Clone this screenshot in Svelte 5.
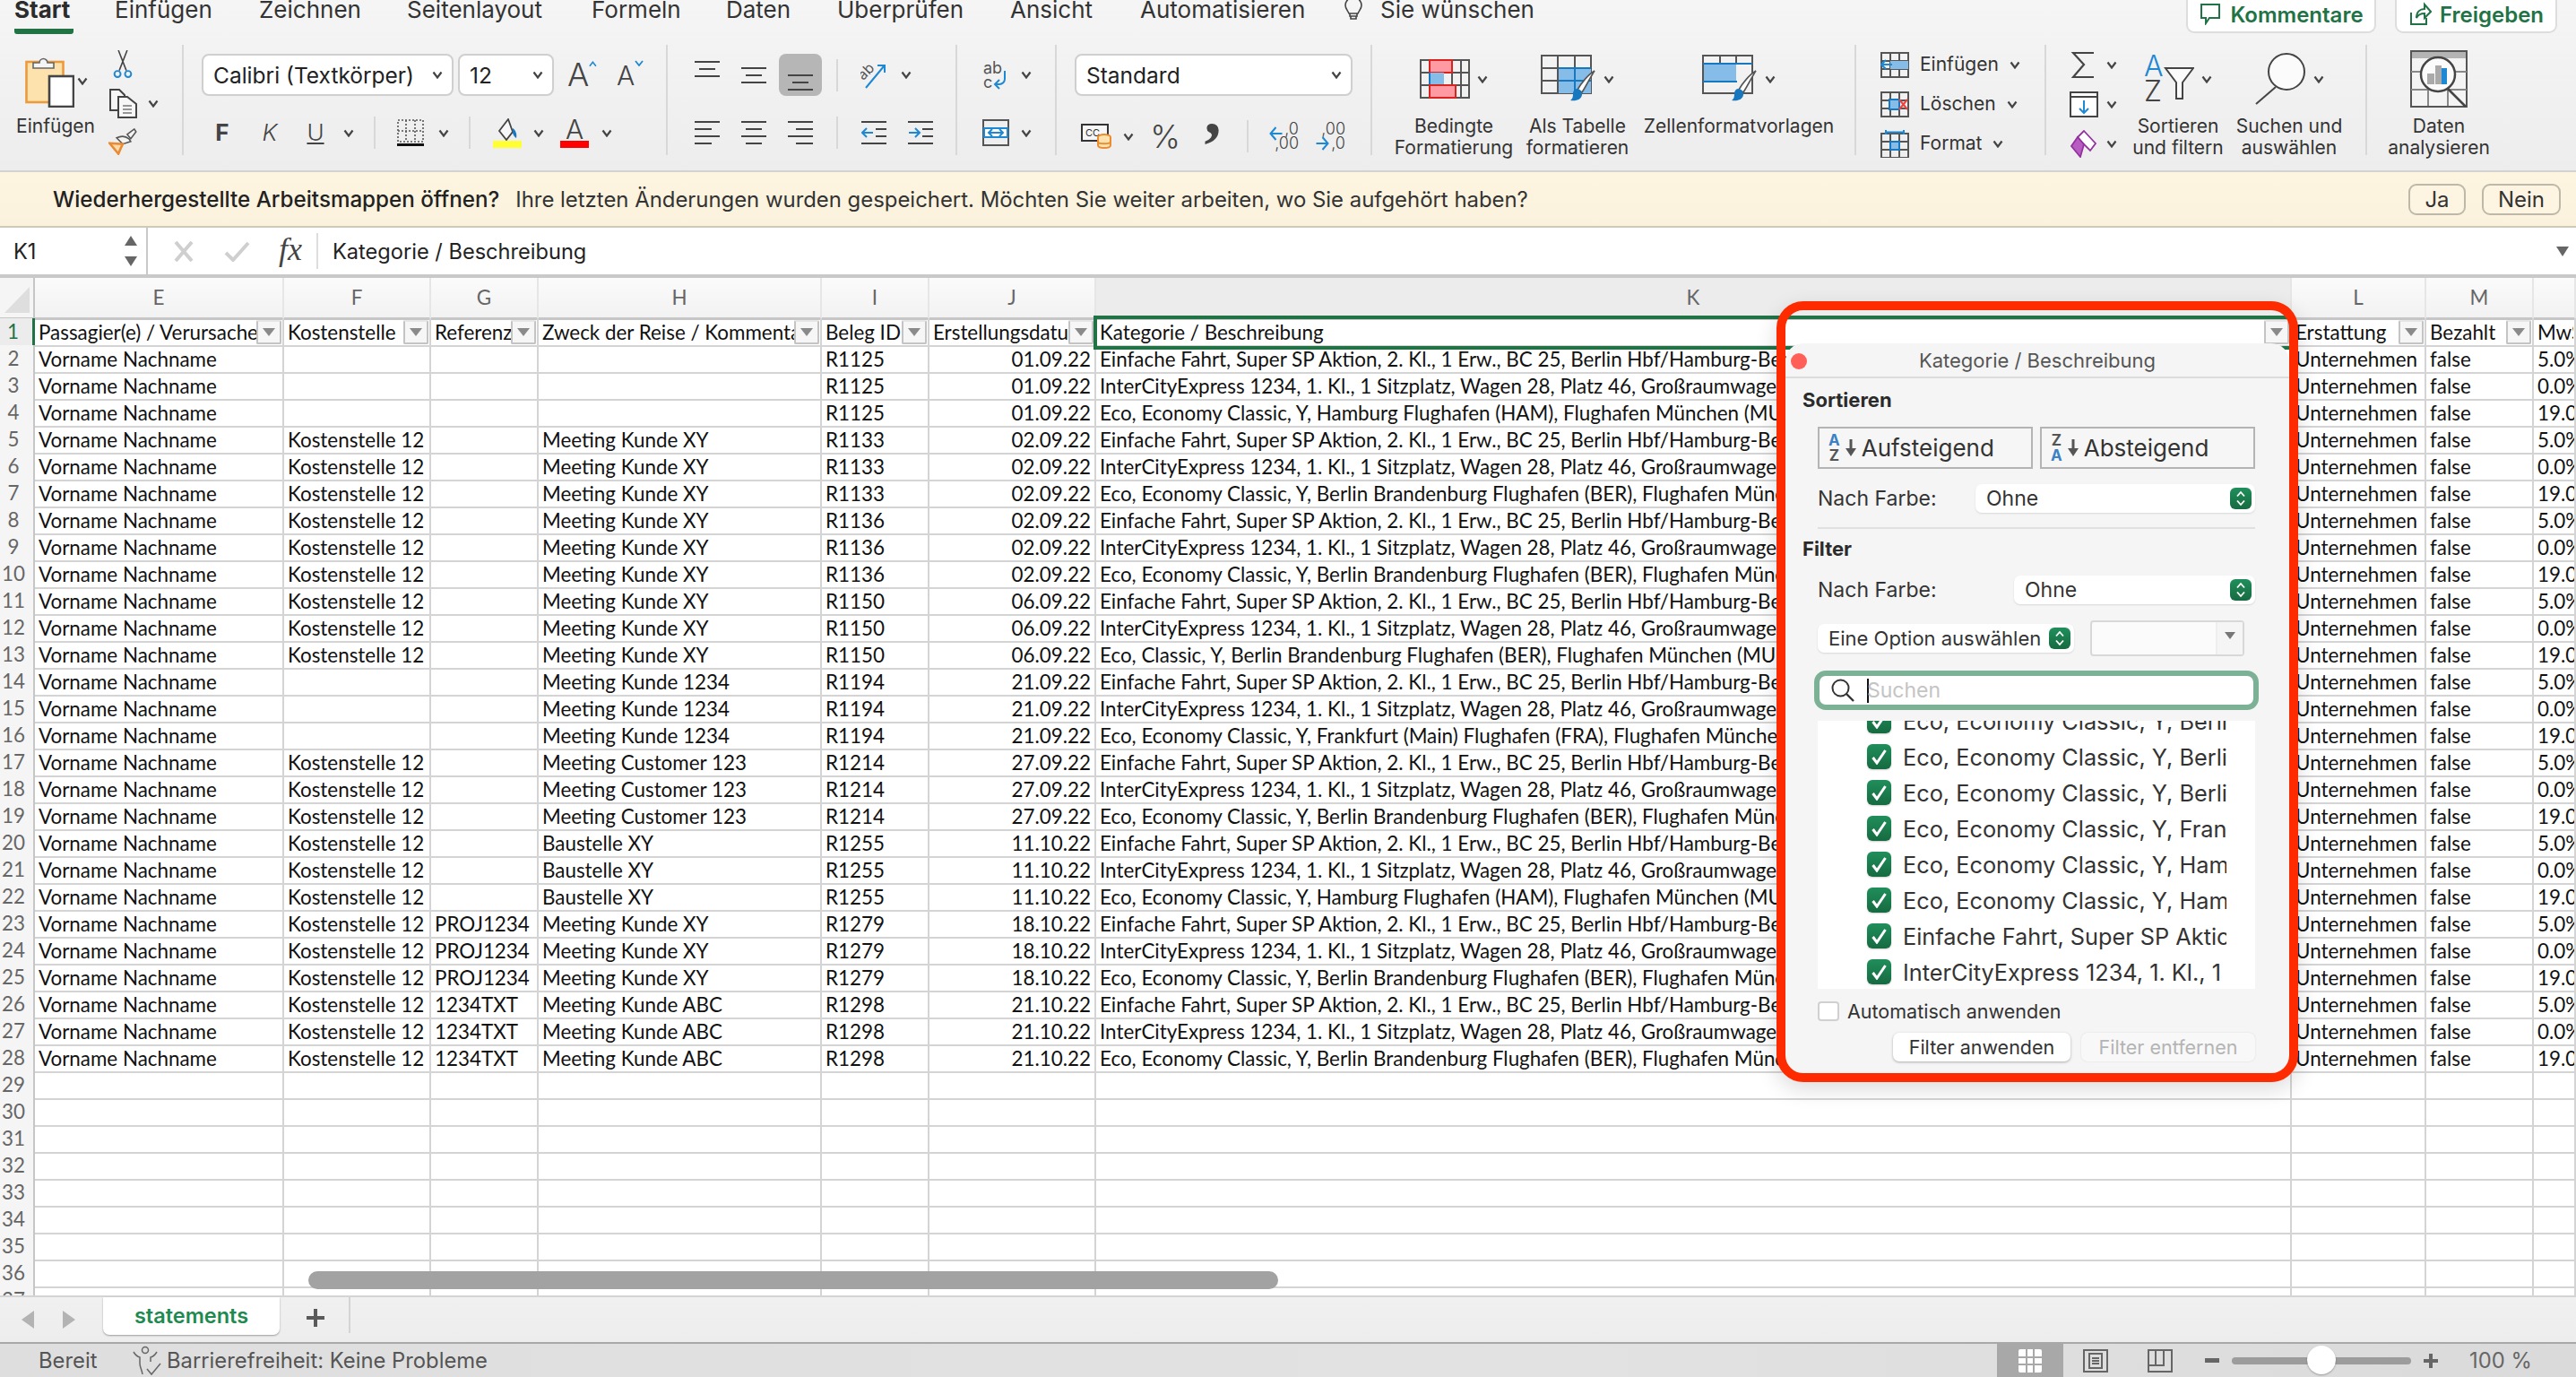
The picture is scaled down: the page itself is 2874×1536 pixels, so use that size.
<script lang="ts">
  const tabs = ['Start', 'Einfügen', 'Zeichnen', 'Seitenlayout', 'Formeln', 'Daten', 'Überprüfen', 'Ansicht', 'Automatisieren'];

  const oneWay = 'Einfache Fahrt, Super SP Aktion, 2. Kl., 1 Erw., BC 25, Berlin Hbf/Hamburg-Bergedorf';
  const ice = 'InterCityExpress 1234, 1. Kl., 1 Sitzplatz, Wagen 28, Platz 46, Großraumwagen, Fenster';
  const ecoBer = 'Eco, Economy Classic, Y, Berlin Brandenburg Flughafen (BER), Flughafen München (MUC)';
  const ecoHam = 'Eco, Economy Classic, Y, Hamburg Flughafen (HAM), Flughafen München (MUC)';
  const ecoFra = 'Eco, Economy Classic, Y, Frankfurt (Main) Flughafen (FRA), Flughafen München (MUC)';
  const ecoOld = 'Eco, Classic, Y, Berlin Brandenburg Flughafen (BER), Flughafen München (MUC)';
  const ks = 'Kostenstelle 12';

  const receipts = [
    { id: 'R1125', date: '01.09.22', f: '', g: '', h: '', flight: ecoHam },
    { id: 'R1133', date: '02.09.22', f: ks, g: '', h: 'Meeting Kunde XY', flight: ecoBer },
    { id: 'R1136', date: '02.09.22', f: ks, g: '', h: 'Meeting Kunde XY', flight: ecoBer },
    { id: 'R1150', date: '06.09.22', f: ks, g: '', h: 'Meeting Kunde XY', flight: ecoOld },
    { id: 'R1194', date: '21.09.22', f: '', g: '', h: 'Meeting Kunde 1234', flight: ecoFra },
    { id: 'R1214', date: '27.09.22', f: ks, g: '', h: 'Meeting Customer 123', flight: ecoBer },
    { id: 'R1255', date: '11.10.22', f: ks, g: '', h: 'Baustelle XY', flight: ecoHam },
    { id: 'R1279', date: '18.10.22', f: ks, g: 'PROJ1234', h: 'Meeting Kunde XY', flight: ecoBer },
    { id: 'R1298', date: '21.10.22', f: ks, g: '1234TXT', h: 'Meeting Kunde ABC', flight: ecoBer }
  ];

  const rows = receipts.flatMap((r) => [
    { ...r, k: oneWay, n: '5.0%' },
    { ...r, k: ice, n: '0.0%' },
    { ...r, k: r.flight, n: '19.0%' }
  ]);
  const emptyRows = Array.from({ length: 9 }, (_, i) => i + 29);

  const filterValues = [
    'Eco, Economy Classic, Y, Berlin Brandenburg',
    'Eco, Economy Classic, Y, Berlin Brandenburg',
    'Eco, Economy Classic, Y, Berlin Brandenburg',
    'Eco, Economy Classic, Y, Frankfurt (Main)',
    'Eco, Economy Classic, Y, Hamburg Flughafen',
    'Eco, Economy Classic, Y, Hamburg Flughafen',
    'Einfache Fahrt, Super SP Aktion, 2. Kl.',
    'InterCityExpress 1234, 1. Kl., 1 Sitzplatz'
  ];
</script>

{#snippet chev()}
  <svg class="chev" width="12" height="9" viewBox="0 0 12 9"><path d="M1.5 1.5 6 7.5l4.5-6" fill="none" stroke="#444" stroke-width="2.2" /></svg>
{/snippet}

{#snippet sep()}
  <span class="vsep"></span>
{/snippet}

{#snippet tri()}
  <svg width="16" height="11" viewBox="0 0 16 11"><path d="M1 1h14L8 10z" fill="#8a8a8a" /></svg>
{/snippet}

{#snippet stepper()}
  <span class="stepper">
    <svg width="12" height="18" viewBox="0 0 12 18"><path d="M2 6.5 6 2l4 4.5M2 11.5 6 16l4-4.5" fill="none" stroke="#fff" stroke-width="1.8" /></svg>
  </span>
{/snippet}

{#snippet hAlign(d)}
  <svg width="28" height="27" viewBox="0 0 28 27"><path {d} stroke="#444" stroke-width="2" fill="none" /></svg>
{/snippet}

{#snippet brush()}
  <path d="M60 18C56 24 50 36 46 42l-5-3C45 32 53 22 60 18z" fill="#fff" stroke="#555" stroke-width="1.6" />
  <path d="M40 38c3 0 7 3 6 7-1 5-6 7-13 6 3-2 3-5 3-8 0-2 2-5 4-5z" fill="#1777bf" />
{/snippet}

{#snippet grid32()}
  <path d="M1 1h30v27H1zM11 1v27M21 1v27M1 10h30M1 19h30" fill="none" stroke="#555" stroke-width="2" />
{/snippet}

<div class="window">
  <div class="top">
    <header class="tabbar">
      <nav class="tabs">
        {#each tabs as tab, i}
          <span class="tab" class:active={i === 0}>{tab}</span>
        {/each}
        <svg class="bulb" width="22" height="28" viewBox="0 0 22 28"><path d="M11 1a9 9 0 0 0-9 9c0 4 3 6 4 9h10c1-3 4-5 4-9a9 9 0 0 0-9-9zM7 19h8v3H7zM8 22h6v3H8z" fill="none" stroke="#444" stroke-width="1.6" /></svg>
        <span class="tab">Sie wünschen</span>
      </nav>
      <div class="share">
        <button class="pill comments">
          <svg width="26" height="24" viewBox="0 0 26 24"><path d="M3 1h20v15H12l-4 6v-6H3z" fill="none" stroke="#217346" stroke-width="2" /></svg>
          Kommentare
        </button>
        <button class="pill release">
          <svg width="26" height="28" viewBox="0 0 26 28"><path d="M3 12v13h17v-7M9 18c0-7 4-10 9-10V3l7 8-7 7v-5c-4 0-7 1-9 5z" fill="none" stroke="#217346" stroke-width="2" /></svg>
          Freigeben
        </button>
      </div>
    </header>

    <div class="ribbon">
      <section class="group g-clip">
        <div class="paste">
          <div class="paste-icon">
            <svg width="55" height="60" viewBox="0 0 55 60">
              <rect x="1.5" y="9" width="41" height="45" fill="#fde2ae" stroke="#ec9a3c" stroke-width="2.6" />
              <path d="M9 16v-6h7a4.500 4.500 0 0 1 9 0h7v6z" fill="#f4f4f4" stroke="#666" stroke-width="1.6" />
              <rect x="27" y="25" width="27" height="34" fill="#fff" stroke="#444" stroke-width="2.6" />
            </svg>
            {@render chev()}
          </div>
          <span class="lbl">Einfügen</span>
        </div>
        <div class="clip-tools">
          <svg class="scissors" width="24" height="32" viewBox="0 0 24 32">
            <path d="M7 0l9 23M17 0L8 23" stroke="#444" stroke-width="1.6" fill="none" />
            <circle cx="6" cy="27" r="3.500" fill="none" stroke="#1e88d2" stroke-width="2" />
            <circle cx="18" cy="27" r="3.500" fill="none" stroke="#1e88d2" stroke-width="2" />
          </svg>
          <div class="clip-row">
            <svg width="32" height="33" viewBox="0 0 32 33">
              <path d="M16 24H2V1h10l6 6v3" fill="#f7f7f7" stroke="#444" stroke-width="2" />
              <path d="M11 9h10l10 8v15H11z" fill="#f7f7f7" stroke="#444" stroke-width="2" />
              <path d="M16 19h10M16 23h10M16 27h10" stroke="#777" stroke-width="1.500" />
            </svg>
            {@render chev()}
          </div>
          <svg class="painter" width="32" height="30" viewBox="0 0 32 30">
            <path d="M21 7l8-6 2 3-6 8z" fill="#f4f4f4" stroke="#555" stroke-width="1.600" />
            <path d="M9 11c4-2 9-3 14 1l2 3-9 3z" fill="#f4f4f4" stroke="#555" stroke-width="1.600" />
            <path d="M1 17l15 1-2 4-3 7z" fill="#fbd9a8" stroke="#ea8a33" stroke-width="2.600" />
          </svg>
        </div>
      </section>

      <section class="group g-font">
        <div class="line-one">
          <div class="select font-name">Calibri (Textkörper) {@render chev()}</div>
          <div class="select font-size">12 {@render chev()}</div>
          <div class="grow-a">
            <span class="big-a">A</span>
            <svg width="10" height="7" viewBox="0 0 10 7"><path d="M1 6l4-5 4 5" fill="none" stroke="#1e88d2" stroke-width="1.800" /></svg>
          </div>
          <div class="shrink-a">
            <span class="small-a">A</span>
            <svg width="10" height="7" viewBox="0 0 10 7"><path d="M1 1l4 5 4-5" fill="none" stroke="#1e88d2" stroke-width="1.800" /></svg>
          </div>
        </div>
        <div class="line-two font-tools">
          <b class="fmt">F</b>
          <i class="fmt thin">K</i>
          <u class="fmt thin">U</u>
          {@render chev()}
          {@render sep()}
          <svg width="30" height="30" viewBox="0 0 30 30">
            <path d="M1 1h28v24H1zM10 1v24M20 1v24M1 13h28" fill="none" stroke="#555" stroke-width="1.600" stroke-dasharray="2 2" />
            <path d="M0 28.500h30" stroke="#111" stroke-width="3" />
          </svg>
          {@render chev()}
          {@render sep()}
          <svg width="32" height="33" viewBox="0 0 32 33">
            <path d="M7 14l10-13 5 14-7 9z" fill="#f7f7f7" stroke="#444" stroke-width="1.800" />
            <path d="M22 11c3 2 5 6 4 11-3-2-5-6-4-11z" fill="#1777bf" />
            <rect y="25" width="32" height="8" fill="#ffff33" />
          </svg>
          {@render chev()}
          <div class="color-a">
            <span class="thin">A</span>
            <i class="bar"></i>
          </div>
          {@render chev()}
        </div>
      </section>

      <section class="group g-align">
        <div class="line-one align-top">
          <svg class="v-top" width="28" height="18" viewBox="0 0 28 18"><path d="M0 1h28M5 9h18M0 17h28" stroke="#444" stroke-width="2" /></svg>
          <svg width="28" height="18" viewBox="0 0 28 18"><path d="M0 1h28M5 9h18M0 17h28" stroke="#444" stroke-width="2" /></svg>
          <span class="pressed">
            <svg width="28" height="18" viewBox="0 0 28 18"><path d="M0 1h28M5 9h18M0 17h28" stroke="#444" stroke-width="2" /></svg>
          </span>
          {@render sep()}
          <svg width="30" height="30" viewBox="0 0 30 30">
            <text x="-2" y="15" class="orient" transform="rotate(-45 8 12)">ab</text>
            <path d="M6 29 26 5M19 4h8v8" fill="none" stroke="#1e88d2" stroke-width="2" />
          </svg>
          {@render chev()}
        </div>
        <div class="line-two align-bottom">
          {@render hAlign('M0 1h28M0 9h19M0 17h28M0 25h19')}
          {@render hAlign('M0 1h28M5 9h18M0 17h28M5 25h18')}
          {@render hAlign('M0 1h28M9 9h19M0 17h28M9 25h19')}
          {@render sep()}
          <svg width="28" height="27" viewBox="0 0 28 27"><path d="M0 1h28M16 9h12M16 17h12M0 25h28" stroke="#444" stroke-width="2" /><path d="M13 13H1m5-5-5 5 5 5" fill="none" stroke="#1e88d2" stroke-width="2" /></svg>
          <svg class="wide" width="28" height="27" viewBox="0 0 28 27"><path d="M0 1h28M16 9h12M16 17h12M0 25h28" stroke="#444" stroke-width="2" /><path d="M1 13h12m-5-5 5 5-5 5" fill="none" stroke="#1e88d2" stroke-width="2" /></svg>
        </div>
      </section>

      <section class="group g-wrap">
        <div class="line-one wrap-row">
          <svg width="28" height="34" viewBox="0 0 28 34">
            <text x="0" y="15" class="tiny">ab</text>
            <text x="0" y="31" class="tiny">c</text>
            <path d="M24 12v9a6 6 0 0 1-6 6h-5m5-5-5 5 5 5" fill="none" stroke="#1e88d2" stroke-width="2" />
          </svg>
          {@render chev()}
        </div>
        <div class="line-two wrap-row">
          <svg width="30" height="30" viewBox="0 0 30 30">
            <path d="M1 1h28v28H1zM1 10h28M1 20h28" fill="none" stroke="#555" stroke-width="2" />
            <path d="M2 10h26v10H2zM8 15h14" fill="#fff" stroke="#1e88d2" stroke-width="2" />
            <path d="M11 11l-4 4 4 4M19 11l4 4-4 4" fill="none" stroke="#1e88d2" stroke-width="2" />
          </svg>
          {@render chev()}
        </div>
      </section>

      <section class="group g-number">
        <div class="line-one">
          <div class="select number-format">Standard {@render chev()}</div>
        </div>
        <div class="line-two number-tools">
          <svg width="34" height="28" viewBox="0 0 34 28">
            <path d="M1 1h29v18H1z" fill="#f7f7f7" stroke="#333" stroke-width="2" />
            <text x="5" y="14" class="mini">CC</text>
            <ellipse cx="26" cy="15" rx="7" ry="3" fill="#fde2ae" stroke="#ec8c30" stroke-width="2" />
            <path d="M19 15v9c0 4 14 4 14 0v-9M19 20c0 3 14 3 14 0" fill="#fde2ae" stroke="#ec8c30" stroke-width="2" />
          </svg>
          {@render chev()}
          <span class="percent">%</span>
          <span class="comma">,</span>
          {@render sep()}
          <div class="dec">
            <svg width="16" height="20" viewBox="0 0 16 20"><path d="M15 10H2m6-7-6 7 6 7" fill="none" stroke="#1e88d2" stroke-width="2" /></svg>
            <span class="d1">,0</span>
            <span class="d2">,00</span>
          </div>
          <div class="dec">
            <span class="d3">,00</span>
            <svg width="16" height="20" viewBox="0 0 16 20"><path d="M1 10h13M8 3l6 7-6 7" fill="none" stroke="#1e88d2" stroke-width="2" /></svg>
            <span class="d4">,0</span>
          </div>
        </div>
      </section>

      <section class="group g-styles">
        <div class="big-btn cond">
          <div class="big-icon">
            <svg width="56" height="44" viewBox="0 0 56 44">
              <path d="M1 1h54v42H1zM11 1v42M36 1v42M46 1v42M1 15h54M1 29h54" fill="none" stroke="#555" stroke-width="2" />
              <rect x="11" y="1" width="25" height="14" fill="#ff99a2" stroke="#d9231f" stroke-width="2" />
              <rect x="11" y="15" width="16" height="14" fill="#86bde8" />
              <path d="M11 15v14" stroke="#1777bf" stroke-width="2" />
              <rect x="11" y="29" width="29" height="14" fill="#ff99a2" stroke="#d9231f" stroke-width="2" />
            </svg>
            {@render chev()}
          </div>
          <span class="lbl">Bedingte<br />Formatierung</span>
        </div>
        <div class="big-btn table">
          <div class="big-icon">
            <svg width="62" height="54" viewBox="0 0 62 54">
              <path d="M1 1h55v42H1zM19 1v42M38 1v42M1 15h55M1 29h55" fill="none" stroke="#555" stroke-width="2" />
              <rect x="20" y="15" width="36" height="28" fill="#86bde8" />
              <path d="M20 15h36M38 15v28M20 29h36" stroke="#1777bf" stroke-width="2" fill="none" />
              {@render brush()}
            </svg>
            {@render chev()}
          </div>
          <span class="lbl">Als Tabelle<br />formatieren</span>
        </div>
        <div class="big-btn cellstyles">
          <div class="big-icon">
            <svg width="62" height="54" viewBox="0 0 62 54">
              <path d="M1 1h55v42H1zM1 10h55M20 1v9M38 1v9" fill="none" stroke="#555" stroke-width="2" />
              <rect x="2" y="10" width="36" height="20" fill="#86bde8" />
              <path d="M1 10h55M1 30h38" stroke="#1777bf" stroke-width="2" />
              {@render brush()}
            </svg>
            {@render chev()}
          </div>
          <span class="lbl">Zellenformatvorlagen</span>
        </div>
      </section>

      <section class="group g-cells">
        <div class="cell-row">
          <svg width="32" height="29" viewBox="0 0 32 29">{@render grid32()}<rect x="11" y="10" width="20" height="9" fill="#86bde8" /><path d="M13 14H1m5-5-5 5 5 5" fill="none" stroke="#1e88d2" stroke-width="2" /></svg>
          <span class="lbl">Einfügen</span>{@render chev()}
        </div>
        <div class="cell-row">
          <svg width="32" height="29" viewBox="0 0 32 29">{@render grid32()}<rect x="10" y="9" width="11" height="11" fill="#86bde8" stroke="#1777bf" stroke-width="2" /><path d="M21 9l9 11M30 9l-9 11" stroke="#f2403a" stroke-width="2" /></svg>
          <span class="lbl">Löschen</span>{@render chev()}
        </div>
        <div class="cell-row">
          <svg width="32" height="31" viewBox="0 0 32 31"><path d="M1 4h30v27H1zM11 4v27M21 4v27M1 13h30M1 22h30" fill="none" stroke="#555" stroke-width="2" /><rect x="11" y="13" width="10" height="9" fill="#86bde8" stroke="#1777bf" stroke-width="2" /><path d="M6 0v5M26 0v5M6 2.500h20" stroke="#1e88d2" stroke-width="2" /></svg>
          <span class="lbl">Format</span>{@render chev()}
        </div>
      </section>

      <section class="group g-edit">
        <div class="edit-col">
          <div class="edit-row">
            <svg width="34" height="29" viewBox="0 0 34 29"><path d="M28 1H5l12 13L5 28h23" fill="none" stroke="#444" stroke-width="2.200" /></svg>
            {@render chev()}
          </div>
          <div class="edit-row">
            <svg width="34" height="29" viewBox="0 0 34 29"><path d="M2 1h30v27H2zM2 6h30" fill="#fff" stroke="#444" stroke-width="2" /><path d="M17 10v14m-5-5 5 5 5-5" fill="none" stroke="#1e88d2" stroke-width="2" /></svg>
            {@render chev()}
          </div>
          <div class="edit-row">
            <svg width="34" height="31" viewBox="0 0 34 31"><path d="M17 1l13 14-6 8L17 16 10 8z" fill="#fff" stroke="#93329e" stroke-width="1.800" /><path d="M10 8l7 8-4 14L3 18z" fill="#b85cc4" stroke="#93329e" stroke-width="1.800" /></svg>
            {@render chev()}
          </div>
        </div>
        <div class="big-btn sort">
          <div class="big-icon">
            <svg width="56" height="54" viewBox="0 0 56 54">
              <text x="0" y="24" class="sort-a">A</text>
              <text x="0" y="52" class="sort-z">Z</text>
              <path d="M24 15h31L43 31v18h-7V31z" fill="#fbfbfb" stroke="#444" stroke-width="2" />
            </svg>
            {@render chev()}
          </div>
          <span class="lbl">Sortieren<br />und filtern</span>
        </div>
        <div class="big-btn find">
          <div class="big-icon">
            <svg width="58" height="58" viewBox="0 0 58 58">
              <circle cx="36" cy="21" r="20" fill="#fbfbfb" stroke="#444" stroke-width="2" />
              <path d="M24 38 2 57" stroke="#444" stroke-width="2" />
            </svg>
            {@render chev()}
          </div>
          <span class="lbl">Suchen und<br />auswählen</span>
        </div>
      </section>

      <section class="group g-data">
        <div class="big-btn data">
          <div class="big-icon">
            <svg width="64" height="64" viewBox="0 0 64 64">
              <rect x="1" y="1" width="62" height="62" fill="#f4f4f4" stroke="#555" stroke-width="2" />
              <rect x="2" y="2" width="60" height="7" fill="#b4b4b4" />
              <path d="M1 24h62M1 44h62M20 44v18M42 44v18" stroke="#888" stroke-width="2" />
              <circle cx="31" cy="27" r="19" fill="#fbfbfb" stroke="#444" stroke-width="2.500" />
              <rect x="19" y="26" width="8" height="12" fill="#aaa" />
              <rect x="28" y="17" width="7" height="21" fill="#aaa" />
              <rect x="35" y="20" width="6" height="18" fill="#1e88d2" />
              <path d="M42 43 62 63" stroke="#444" stroke-width="2.500" />
            </svg>
          </div>
          <span class="lbl">Daten<br />analysieren</span>
        </div>
      </section>
    </div>
  </div>

  <div class="notice">
    <strong>Wiederhergestellte Arbeitsmappen öffnen?</strong>
    <span>Ihre letzten Änderungen wurden gespeichert. Möchten Sie weiter arbeiten, wo Sie aufgehört haben?</span>
    <button class="ja">Ja</button>
    <button class="nein">Nein</button>
  </div>

  <div class="formula">
    <div class="namebox">
      <span>K1</span>
      <div class="spin">
        <svg width="14" height="11" viewBox="0 0 14 11"><path d="M7 0l7 11H0z" fill="#666" /></svg>
        <svg width="14" height="11" viewBox="0 0 14 11"><path d="M7 11 0 0h14z" fill="#666" /></svg>
      </div>
    </div>
    <svg class="fx-x" width="24" height="23" viewBox="0 0 24 23"><path d="M3 1l18 21M21 1 3 22" stroke="#cfcfcf" stroke-width="4" /></svg>
    <svg class="fx-ok" width="29" height="23" viewBox="0 0 29 23"><path d="M2 13l8 8L27 2" fill="none" stroke="#cfcfcf" stroke-width="4" /></svg>
    <span class="fx">fx</span>
    <span class="fx-text">Kategorie / Beschreibung</span>
    <svg class="fx-more" width="14" height="11" viewBox="0 0 14 11"><path d="M0 0h14L7 11z" fill="#666" /></svg>
  </div>

  <main class="sheet">
    <div class="gridrow colheads">
      <div class="corner"><span></span></div>
      {#each ['E', 'F', 'G', 'H', 'I', 'J', 'K', 'L', 'M', ''] as col}
        <div class="colhead" class:current={col === 'K'}>{col}</div>
      {/each}
    </div>

    <div class="gridrow">
      <div class="rowhead current">1</div>
      {#each ['Passagier(e) / Verursacher', 'Kostenstelle', 'Referenz', 'Zweck der Reise / Kommentar', 'Beleg ID', 'Erstellungsdatum', 'Kategorie / Beschreibung', 'Erstattung', 'Bezahlt', 'MwSt'] as title, i}
        <div class="cell head" class:selected={i === 6}>
          <span class="clip">{title}</span>
          {#if i < 9}<span class="filterbtn">{@render tri()}</span>{/if}
        </div>
      {/each}
    </div>

    {#each rows as r, i}
      <div class="gridrow">
        <div class="rowhead">{i + 2}</div>
        <div class="cell"><span class="clip">Vorname Nachname</span></div>
        <div class="cell"><span class="clip">{r.f}</span></div>
        <div class="cell"><span class="clip">{r.g}</span></div>
        <div class="cell"><span class="clip">{r.h}</span></div>
        <div class="cell"><span class="clip">{r.id}</span></div>
        <div class="cell num"><span class="clip">{r.date}</span></div>
        <div class="cell"><span class="clip">{r.k}</span></div>
        <div class="cell"><span class="clip">Unternehmen</span></div>
        <div class="cell"><span class="clip">false</span></div>
        <div class="cell"><span class="clip">{r.n}</span></div>
      </div>
    {/each}

    {#each emptyRows as n}
      <div class="gridrow">
        <div class="rowhead">{n}</div>
        {#each Array(10) as _}
          <div class="cell"></div>
        {/each}
      </div>
    {/each}

    <div class="scrollthumb"></div>

    <div class="popup">
      <div class="pop-title">
        <span class="close"></span>
        Kategorie / Beschreibung
      </div>
      <h4 class="first">Sortieren</h4>
      <div class="sort-btns">
        <button>
          <span class="az"><b class="blue">A</b><b>Z</b></span>
          <svg width="12" height="19" viewBox="0 0 12 19"><path d="M6 0v12" stroke="#555" stroke-width="3" /><path d="M0 10h12l-6 9z" fill="#555" /></svg>
          Aufsteigend
        </button>
        <button>
          <span class="az"><b>Z</b><b class="blue">A</b></span>
          <svg width="12" height="19" viewBox="0 0 12 19"><path d="M6 0v12" stroke="#555" stroke-width="3" /><path d="M0 10h12l-6 9z" fill="#555" /></svg>
          Absteigend
        </button>
      </div>
      <div class="colorline">
        <label for="sortcolor">Nach Farbe:</label>
        <div id="sortcolor" class="popselect sort-color"><span>Ohne</span>{@render stepper()}</div>
      </div>
      <hr />
      <h4>Filter</h4>
      <div class="colorline second">
        <label for="filtercolor">Nach Farbe:</label>
        <div id="filtercolor" class="popselect filter-color"><span>Ohne</span>{@render stepper()}</div>
      </div>
      <div class="optionline">
        <div class="popselect option"><span>Eine Option auswählen</span>{@render stepper()}</div>
        <div class="combo">
          <span></span>
          <i><svg width="12" height="8" viewBox="0 0 12 8"><path d="M0 0h12L6 8z" fill="#777" /></svg></i>
        </div>
      </div>
      <div class="search">
        <svg width="26" height="26" viewBox="0 0 26 26"><circle cx="10.500" cy="10.500" r="9" fill="none" stroke="#333" stroke-width="2" /><path d="M17 17l8 8" stroke="#333" stroke-width="2.400" /></svg>
        <i class="caret"></i>
        <span>Suchen</span>
      </div>
      <ul class="values">
        {#each filterValues as value}
          <li>
            <span class="tick">
              <svg width="19" height="18" viewBox="0 0 19 18"><path d="M2.500 10l4.500 6L16.500 2" fill="none" stroke="#fff" stroke-width="3" /></svg>
            </span>
            <span class="val">{value}</span>
          </li>
        {/each}
      </ul>
      <div class="autoapply">
        <span class="box"></span>
        Automatisch anwenden
      </div>
      <div class="pop-actions">
        <button class="apply">Filter anwenden</button>
        <button class="clear" disabled>Filter entfernen</button>
      </div>
    </div>
    <div class="redframe"></div>
  </main>

  <div class="sheetbar">
    <svg width="14" height="20" viewBox="0 0 14 20"><path d="M14 0v20L0 10z" fill="#b3b3b3" /></svg>
    <svg class="next" width="14" height="20" viewBox="0 0 14 20"><path d="M0 0v20l14-10z" fill="#b3b3b3" /></svg>
    <div class="sheettab">statements</div>
    <svg class="plus" width="20" height="20" viewBox="0 0 20 20"><path d="M10 0v20M0 10h20" stroke="#5a5a5a" stroke-width="4" /></svg>
    <span class="bar-sep"></span>
  </div>

  <footer class="status">
    <span class="ready">Bereit</span>
    <svg class="a11y-icon" width="32" height="34" viewBox="0 0 32 34">
      <circle cx="14" cy="5" r="3.500" fill="none" stroke="#666" stroke-width="1.500" />
      <path d="M1 7c3 5 7 6 7 6v7c0 4 2 6 3 12M27 7c-3 5-7 6-7 6v5" fill="none" stroke="#666" stroke-width="1.500" />
      <path d="M16 26l5 6 10-12" fill="none" stroke="#666" stroke-width="1.500" />
    </svg>
    <span class="a11y">Barrierefreiheit: Keine Probleme</span>
    <div class="views">
      <span class="view on">
        <svg width="26" height="26" viewBox="0 0 26 26"><rect width="26" height="26" rx="2" fill="#fff" /><path d="M9 0v26M17 0v26M0 9h26M0 17h26" stroke="#a8a8a8" stroke-width="2" /></svg>
      </span>
      <span class="view">
        <svg width="28" height="26" viewBox="0 0 28 26"><path d="M1 1h26v24H1z" fill="none" stroke="#666" stroke-width="2" /><path d="M7 5h14v16H7zM10 10h8M10 13h8M10 16h8" fill="none" stroke="#666" stroke-width="2" /></svg>
      </span>
      <span class="view">
        <svg width="28" height="26" viewBox="0 0 28 26"><path d="M1 1h26v24H1zM1 18h17V1M9 1v17" fill="none" stroke="#666" stroke-width="2" /></svg>
      </span>
    </div>
    <svg class="zoom-minus" width="16" height="6" viewBox="0 0 16 6"><rect width="16" height="5" fill="#666" /></svg>
    <div class="slider"><span></span></div>
    <svg class="zoom-plus" width="16" height="16" viewBox="0 0 16 16"><path d="M8 0v16M0 8h16" stroke="#666" stroke-width="4" /></svg>
    <span class="percentage">100 %</span>
  </footer>
</div>

<style>
  :global(body) {
    margin: 0;
    background: #fff;
  }

  .window {
    width: 2874px;
    height: 1536px;
    overflow: hidden;
    display: flex;
    flex-direction: column;
    font-family: Inter, "Liberation Sans", sans-serif;
    color: #333;
  }

  button {
    font-family: inherit;
    color: inherit;
  }

  .top {
    height: 192px;
    flex: none;
    box-sizing: border-box;
    border-bottom: 2px solid #d2d2d2;
    background: linear-gradient(#f5f5f5, #ededed);
  }

  /* tab row */
  .tabbar {
    height: 50px;
    display: flex;
    justify-content: space-between;
    padding: 0 21px 0 16px;
  }

  .tabs {
    display: grid;
    grid-template-columns: 112px 161px 165px 206px 150px 124px 193px 145px 227px 41px auto;
    height: 38px;
    align-items: start;
  }

  .tab {
    font-size: 26px;
    line-height: 22px;
    height: 38px;
    box-sizing: border-box;
    color: #333;
    white-space: nowrap;
  }

  .tab.active {
    font-weight: 700;
    justify-self: start;
    width: 66px;
    border-bottom: 6px solid #217346;
    border-radius: 0 0 3px 3px;
    color: #2c2c2c;
  }

  .bulb {
    margin-top: -4px;
  }

  .share {
    display: flex;
    gap: 21px;
  }

  .pill {
    height: 37px;
    box-sizing: border-box;
    background: #fff;
    border: 2px solid #ddd;
    border-top: 0;
    border-radius: 0 0 9px 9px;
    display: flex;
    align-items: center;
    gap: 9px;
    font-size: 24px;
    font-weight: 600;
    color: #217346;
    padding: 0 0 3px;
    justify-content: center;
  }

  .comments {
    width: 212px;
  }

  .release {
    width: 181px;
  }

  /* ribbon */
  .ribbon {
    display: flex;
    height: 123px;
  }

  .group {
    flex: none;
    height: 123px;
    box-sizing: border-box;
    border-right: 2px solid #d8d8d8;
  }

  .lbl {
    font-size: 21px;
    line-height: 24px;
    color: #333;
    text-align: center;
    white-space: nowrap;
  }

  .chev {
    flex: none;
  }

  .vsep {
    width: 2px;
    height: 36px;
    background: #d8d8d8;
  }

  .g-clip {
    width: 205px;
    display: flex;
  }

  .paste {
    width: 88px;
    margin-left: 18px;
    padding-top: 10px;
    display: flex;
    flex-direction: column;
  }

  .paste-icon {
    height: 60px;
    flex: none;
    padding-left: 10px;
    display: flex;
    align-items: center;
    gap: 3px;
  }

  .paste .lbl {
    margin-top: 9px;
  }

  .clip-tools {
    margin-left: 15px;
    padding-top: 6px;
    display: flex;
    flex-direction: column;
    align-items: flex-start;
  }

  .scissors {
    margin-left: 4px;
  }

  .clip-row {
    display: flex;
    align-items: center;
    gap: 12px;
    margin-top: 12px;
  }

  .painter {
    margin-top: 11px;
  }

  .line-one {
    height: 47px;
    margin-top: 10px;
    display: flex;
    align-items: center;
  }

  .line-two {
    height: 36px;
    margin-top: 23px;
    display: grid;
    align-items: center;
    justify-items: center;
  }

  .select {
    height: 47px;
    box-sizing: border-box;
    background: #fff;
    border: 2px solid #cfcfcf;
    border-radius: 8px;
    display: flex;
    align-items: center;
    justify-content: space-between;
    padding: 0 10px 0 11px;
    font-size: 24.500px;
    color: #222;
  }

  .g-font {
    width: 540px;
    padding-left: 20px;
  }

  .font-name {
    width: 281px;
  }

  .font-size {
    width: 107px;
    margin-left: 5px;
  }

  .grow-a,
  .shrink-a {
    display: flex;
    align-items: flex-start;
    color: #444;
    font-weight: 300;
  }

  .grow-a {
    margin-left: 15px;
    width: 33px;
  }

  .shrink-a {
    margin-left: 22px;
  }

  .grow-a svg,
  .shrink-a svg {
    margin-top: 8px;
  }

  .big-a {
    font-size: 36px;
    line-height: 47px;
  }

  .small-a {
    font-size: 30px;
    line-height: 50px;
  }

  .font-tools {
    grid-template-columns: 46px 60px 42px 32px 26px 54px 20px 38px 46px 24px 56px 16px;
  }

  .fmt {
    font-size: 26px;
    line-height: 30px;
    color: #444;
  }

  .thin {
    font-weight: 300;
  }

  .color-a {
    width: 32px;
    display: flex;
    flex-direction: column;
    align-items: center;
    font-size: 30px;
    line-height: 26px;
    color: #444;
  }

  .color-a .bar {
    width: 32px;
    height: 8px;
    background: #f00;
  }

  .g-align {
    width: 323px;
    padding-left: 20px;
  }

  .align-top {
    display: grid;
    grid-template-columns: 48px 56px 48px 34px 48px 24px;
    justify-items: center;
    align-items: center;
  }

  .v-top {
    align-self: start;
    margin-top: 8px;
  }

  .pressed {
    width: 48px;
    height: 47px;
    box-sizing: border-box;
    background: #b6b6b6;
    border-radius: 8px;
    display: flex;
    align-items: flex-end;
    justify-content: center;
    padding-bottom: 6px;
  }

  .orient {
    font-size: 16px;
    fill: #555;
  }

  .align-bottom {
    grid-template-columns: 48px 56px 48px 34px 48px 24px 32px;
  }

  .wide {
    grid-column: span 2;
  }

  .g-wrap {
    width: 111px;
    padding-left: 20px;
  }

  .wrap-row {
    display: grid;
    grid-template-columns: 46px 22px;
    justify-items: center;
    align-items: center;
  }

  .tiny {
    font-size: 18px;
    fill: #555;
  }

  .g-number {
    width: 352px;
    padding-left: 20px;
  }

  .number-format {
    width: 310px;
  }

  .number-tools {
    grid-template-columns: 48px 24px 58px 48px 30px 50px 54px;
  }

  .mini {
    font-size: 11px;
    fill: #333;
  }

  .percent {
    font-size: 36px;
    font-weight: 300;
    color: #444;
  }

  .comma {
    font-size: 76px;
    line-height: 36px;
    font-family: "Liberation Serif", serif;
    font-weight: 700;
    color: #444;
    transform: translateY(-29px);
  }

  .dec {
    width: 34px;
    height: 32px;
    display: grid;
    grid-template-columns: 17px 17px;
    grid-template-rows: 16px 16px;
    align-items: center;
    justify-items: end;
    font-size: 18px;
    line-height: 16px;
    color: #444;
    font-weight: 300;
  }

  .dec svg {
    grid-row: 1 / 3;
    grid-column: 1;
    justify-self: start;
    width: 17px;
    margin-top: -6px;
  }

  .dec .d1 {
    grid-row: 1;
    grid-column: 2;
  }

  .dec .d2 {
    grid-row: 2;
    grid-column: 1 / 3;
  }

  .dec .d3 {
    grid-row: 1;
    grid-column: 1 / 3;
  }

  .dec .d4 {
    grid-row: 2;
    grid-column: 2;
  }

  .dec:last-child svg {
    grid-row: 2;
    margin-top: 0;
    align-self: center;
  }

  .g-styles {
    width: 540px;
    padding-left: 20px;
    display: flex;
  }

  .big-btn {
    flex: none;
    display: flex;
    flex-direction: column;
    align-items: center;
    padding-top: 6px;
  }

  .big-icon {
    flex: none;
    height: 64px;
    display: flex;
    align-items: center;
    gap: 8px;
  }

  .big-btn .lbl {
    flex: none;
    margin-top: 9px;
  }

  .cond {
    width: 142px;
  }

  .table {
    width: 134px;
  }

  .cellstyles {
    width: 226px;
  }

  .g-cells {
    width: 212px;
    padding-left: 27px;
    display: flex;
    flex-direction: column;
  }

  .cell-row {
    flex: none;
    height: 44px;
    display: flex;
    align-items: center;
    gap: 12px;
  }

  .g-edit {
    width: 358px;
    padding-left: 25px;
    display: flex;
  }

  .edit-col {
    width: 62px;
    flex: none;
  }

  .edit-row {
    height: 44px;
    display: flex;
    align-items: center;
    gap: 8px;
    margin-right: -8px;
  }

  .sort {
    width: 120px;
  }

  .find {
    width: 128px;
  }

  .sort-a,
  .sort-z {
    font-size: 32px;
    font-weight: 300;
  }

  .sort-a {
    fill: #1e88d2;
  }

  .sort-z {
    fill: #444;
  }

  .g-data {
    width: 160px;
    border-right: 0;
  }

  .data {
    width: 160px;
  }

  /* restore notification */
  .notice {
    height: 62px;
    flex: none;
    box-sizing: border-box;
    display: flex;
    align-items: center;
    padding: 0 17px 0 59px;
    background: linear-gradient(#fef5e0, #fbf2dd);
    border-bottom: 2px solid #cfc9b8;
    font-size: 23.900px;
    color: #333;
  }

  .notice strong {
    font-size: 24.200px;
    font-weight: 500;
    margin-right: 18px;
    color: #222;
  }

  .notice button {
    height: 35px;
    box-sizing: border-box;
    background: #fdf5e2;
    border: 2px solid #bdb8a8;
    border-radius: 9px;
    font-size: 24px;
    padding: 0;
  }

  .ja {
    width: 64px;
    margin-left: auto;
  }

  .nein {
    width: 88px;
    margin-left: 18px;
  }

  /* formula bar */
  .formula {
    height: 56px;
    flex: none;
    box-sizing: border-box;
    display: flex;
    align-items: center;
    background: #fff;
    border-bottom: 4px solid #c9c9c9;
    font-size: 23.600px;
    color: #222;
  }

  .namebox {
    width: 165px;
    height: 52px;
    box-sizing: border-box;
    border-right: 2px solid #c9c9c9;
    padding: 0 10px 0 15px;
    display: flex;
    align-items: center;
    justify-content: space-between;
  }

  .spin {
    display: flex;
    flex-direction: column;
    gap: 12px;
  }

  .fx-x {
    margin-left: 28px;
  }

  .fx-ok {
    margin-left: 33px;
  }

  .fx {
    margin-left: 30px;
    width: 46px;
    height: 40px;
    box-sizing: border-box;
    border-right: 2px solid #ddd;
    padding-left: 2px;
    font-family: "Liberation Serif", serif;
    font-style: italic;
    font-size: 36px;
    line-height: 36px;
    color: #444;
  }

  .fx-text {
    margin-left: 16px;
  }

  .fx-more {
    margin-left: auto;
    margin-right: 8px;
  }

  /* worksheet */
  .sheet {
    position: relative;
    height: 1135px;
    flex: none;
    overflow: hidden;
    background: #fff;
    font-family: Lato, Carlito, sans-serif;
    font-size: 22.400px;
    color: #111;
  }

  .gridrow {
    display: grid;
    grid-template-columns: 39px 278px 164px 120px 316px 120px 186px 1334px 150px 120px 47px;
    height: 30px;
  }

  .colheads {
    height: 45px;
  }

  .corner {
    box-sizing: border-box;
    background: #f5f5f5;
    border-bottom: 3px solid #c6c6c6;
    border-right: 2px solid #c6c6c6;
    padding: 10px 4px 5px 5px;
  }

  .corner span {
    display: block;
    height: 100%;
    background: #dedede;
    clip-path: polygon(100% 0, 100% 100%, 0 100%);
  }

  .colhead {
    box-sizing: border-box;
    background: linear-gradient(#fbfbfb, #f2f2f2);
    border-bottom: 3px solid #c6c6c6;
    border-right: 2px solid #e6e6e6;
    text-align: center;
    line-height: 44px;
    color: #666;
  }

  .colhead.current {
    background: #ececec;
  }

  .rowhead {
    box-sizing: border-box;
    background: #f5f5f5;
    border-right: 2px solid #c6c6c6;
    border-bottom: 2px solid #d4d4d4;
    padding-right: 7px;
    text-align: center;
    line-height: 30px;
    color: #666;
  }

  .rowhead.current {
    color: #217346;
    background: #ececec;
    border-right: 3px solid #217346;
  }

  .cell {
    box-sizing: border-box;
    border-right: 2px solid #d4d4d4;
    border-bottom: 2px solid #d4d4d4;
    display: flex;
    align-items: center;
    padding: 1px 0 0 4px;
    line-height: 28px;
    min-width: 0;
  }

  .cell.num {
    justify-content: flex-end;
    padding-right: 4px;
  }

  .clip {
    flex: 1;
    min-width: 0;
    overflow: hidden;
    white-space: nowrap;
  }

  .cell.num .clip {
    flex: none;
  }

  .cell.head {
    padding-right: 1px;
  }

  .cell.selected {
    position: relative;
    z-index: 1;
    outline: 4px solid #217346;
    outline-offset: -1px;
  }

  .filterbtn {
    flex: none;
    width: 28px;
    height: 27px;
    box-sizing: border-box;
    background: #f6f6f6;
    border: 2px solid #c4c4c4;
    border-top-color: #e6e6e6;
    border-radius: 2px;
    display: flex;
    align-items: center;
    justify-content: center;
  }

  .scrollthumb {
    position: absolute;
    left: 344px;
    top: 1108px;
    width: 1082px;
    height: 20px;
    border-radius: 10px;
    background: #a2a2a2;
  }

  /* filter dialog */
  .popup {
    position: absolute;
    z-index: 2;
    left: 1992px;
    top: 73px;
    width: 562px;
    height: 814px;
    box-sizing: border-box;
    padding: 0 38px 0 36px;
    background: #f5f5f5;
    border-radius: 20px 20px 16px 16px;
    font-family: Inter, "Liberation Sans", sans-serif;
    font-size: 23px;
    color: #333;
  }

  .pop-title {
    height: 39px;
    margin: 0 -38px 0 -36px;
    box-sizing: border-box;
    border-bottom: 2px solid #dcdcdc;
    display: flex;
    align-items: center;
    justify-content: center;
    position: relative;
    font-size: 22px;
    color: #555;
  }

  .close {
    position: absolute;
    left: 6px;
    top: 11px;
    width: 18px;
    height: 18px;
    border-radius: 50%;
    background: #ff5f57;
  }

  .popup h4 {
    margin: 10px 0 0 -17px;
    font-size: 22px;
    line-height: 24px;
    font-weight: 700;
    color: #2b2b2b;
  }

  .popup h4.first {
    margin-top: 12px;
  }

  .sort-btns {
    display: flex;
    gap: 8px;
    margin-top: 18px;
  }

  .sort-btns button {
    width: 240px;
    height: 47px;
    box-sizing: border-box;
    border: 2px solid #b4b4b4;
    background: #f6f6f6;
    display: flex;
    align-items: center;
    padding: 0 0 0 10px;
    gap: 6px;
    font-size: 26px;
    color: #333;
  }

  .az {
    display: flex;
    flex-direction: column;
    font-size: 17px;
    line-height: 17px;
    color: #555;
  }

  .az .blue {
    color: #3d82c4;
  }

  .colorline {
    display: flex;
    align-items: center;
    justify-content: space-between;
    margin-top: 17px;
  }

  .colorline.second {
    margin-top: 18px;
  }

  .popselect {
    height: 32px;
    box-sizing: border-box;
    background: #fff;
    border-radius: 7px;
    box-shadow: 0 1px 2px rgba(0, 0, 0, 0.12);
    display: flex;
    align-items: center;
    justify-content: space-between;
    padding: 0 4px 0 12px;
    white-space: nowrap;
  }

  .sort-color {
    width: 312px;
  }

  .filter-color {
    width: 269px;
  }

  .stepper {
    width: 24px;
    height: 24px;
    border-radius: 6px;
    background: linear-gradient(#1f8f5b, #176a41);
    display: flex;
    align-items: center;
    justify-content: center;
  }

  .popup hr {
    margin: 16px 0 0;
    border: 0;
    border-top: 2px solid #e0e0e0;
  }

  .optionline {
    display: flex;
    align-items: center;
    margin-top: 18px;
    height: 40px;
  }

  .option {
    width: 286px;
    font-size: 22px;
  }

  .combo {
    margin-left: 18px;
    width: 172px;
    height: 40px;
    box-sizing: border-box;
    background: #fbfbfb;
    border: 2px solid #d8d8d8;
    border-radius: 4px;
    display: flex;
  }

  .combo span {
    flex: 1;
    border-right: 2px solid #eee;
  }

  .combo i {
    width: 28px;
    background: #f5f5f5;
    display: flex;
    align-items: center;
    justify-content: center;
    padding-bottom: 6px;
    box-sizing: border-box;
  }

  .search {
    margin: 16px -4px 0;
    height: 44px;
    box-sizing: border-box;
    background: #fff;
    border: 6px solid #7db195;
    border-radius: 13px;
    display: flex;
    align-items: center;
    padding-left: 13px;
    color: #c4c4c4;
  }

  .caret {
    width: 2px;
    height: 27px;
    margin-left: 14px;
    background: #111;
  }

  .search span {
    margin-left: -2px;
  }

  .values {
    list-style: none;
    margin: 12px 0 0;
    padding: 0;
    height: 299px;
    overflow: hidden;
    background: #fff;
  }

  .values li {
    height: 40px;
    display: flex;
    align-items: center;
    padding-left: 55px;
    font-size: 25.300px;
  }

  .values li:first-child {
    margin-top: -20px;
  }

  .tick {
    width: 27px;
    height: 28px;
    flex: none;
    border-radius: 6px;
    background: linear-gradient(#1f8f5b, #176a41);
    box-shadow: 0 1px 2px rgba(0, 0, 0, 0.2);
    display: flex;
    align-items: center;
    justify-content: center;
  }

  .val {
    width: 361px;
    margin-left: 13px;
    overflow: hidden;
    white-space: nowrap;
  }

  .autoapply {
    margin-top: 14px;
    height: 22px;
    display: flex;
    align-items: center;
    gap: 9px;
    font-size: 21.500px;
  }

  .box {
    width: 24px;
    height: 22px;
    box-sizing: border-box;
    background: #fff;
    border: 2px solid #d0d0d0;
    border-radius: 4px;
  }

  .pop-actions {
    margin-top: 13px;
    display: flex;
    justify-content: flex-end;
    gap: 12px;
  }

  .pop-actions button {
    height: 32px;
    box-sizing: border-box;
    border: 0;
    border-radius: 7px;
    font-size: 21.500px;
    padding: 0;
  }

  .apply {
    width: 198px;
    background: #fff;
    box-shadow: 0 1px 3px rgba(0, 0, 0, 0.3);
  }

  .pop-actions .clear {
    width: 194px;
    background: #f8f8f8;
    color: #b4b4b4;
    box-shadow: 0 0 2px rgba(0, 0, 0, 0.12);
  }

  .redframe {
    position: absolute;
    z-index: 3;
    left: 1982px;
    top: 26px;
    width: 582px;
    height: 871px;
    box-sizing: border-box;
    border: 10px solid #fe2a00;
    border-radius: 30px;
    box-shadow: 0 8px 24px rgba(0, 0, 0, 0.14);
  }

  /* sheet tabs */
  .sheetbar {
    height: 52px;
    flex: none;
    box-sizing: border-box;
    display: flex;
    align-items: flex-start;
    background: linear-gradient(#f0f0f0, #ededed);
    border-top: 2px solid #d4d4d4;
    padding-left: 24px;
  }

  .sheetbar svg {
    margin-top: 15px;
  }

  .sheetbar .next {
    margin-left: 32px;
  }

  .sheettab {
    width: 197px;
    height: 42px;
    margin-left: 31px;
    box-sizing: border-box;
    background: #fff;
    border-radius: 0 0 7px 7px;
    box-shadow: 0 1px 2px rgba(0, 0, 0, 0.35);
    text-align: center;
    line-height: 42px;
    font-size: 23.500px;
    font-weight: 600;
    color: #1e8a50;
  }

  .sheetbar .plus {
    margin: 13px 0 0 30px;
  }

  .bar-sep {
    width: 2px;
    height: 40px;
    margin-left: 27px;
    background: #d4d4d4;
  }

  /* status bar */
  .status {
    flex: 1;
    box-sizing: border-box;
    border-top: 2px solid #a8a8a8;
    background: linear-gradient(90deg, #dedede, #e2e2e2 60%, #dadada);
    display: flex;
    align-items: center;
    font-size: 23.800px;
    color: #555;
    padding-left: 43px;
  }

  .ready {
    width: 66px;
  }

  .a11y-icon {
    margin-left: 39px;
  }

  .a11y {
    margin-left: 6px;
  }

  .views {
    margin-left: auto;
    display: flex;
    align-self: stretch;
    align-items: stretch;
  }

  .view {
    width: 72px;
    display: flex;
    align-items: center;
    justify-content: center;
  }

  .view.on {
    width: 74px;
    background: #a8a8a8;
  }

  .zoom-minus {
    margin-left: 14px;
  }

  .slider {
    position: relative;
    width: 200px;
    height: 8px;
    margin-left: 14px;
    border-radius: 4px;
    background: #9c9c9c;
  }

  .slider span {
    position: absolute;
    left: 84px;
    top: -13px;
    width: 32px;
    height: 32px;
    border-radius: 50%;
    background: #fff;
    box-shadow: 0 1px 2px rgba(0, 0, 0, 0.3);
  }

  .zoom-plus {
    margin-left: 14px;
  }

  .percentage {
    width: 119px;
    margin-left: 35px;
    color: #666;
  }
</style>
